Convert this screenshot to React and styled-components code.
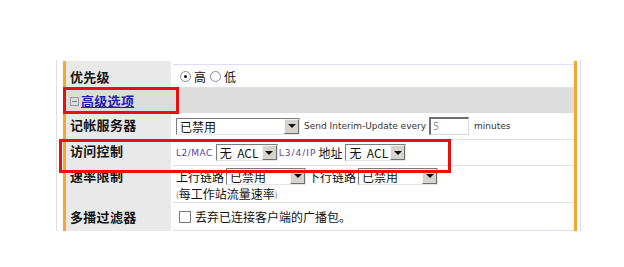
import React from "react";
import styled, { createGlobalStyle } from "styled-components";

const GlobalStyle = createGlobalStyle`
  html, body {
    margin: 0;
    padding: 0;
    background: #ffffff;
  }
  body {
    font-family: "Noto Sans CJK SC", "DejaVu Sans", sans-serif;
    color: #111;
  }
`;

const Page = styled.div`
  position: relative;
  width: 624px;
  height: 267px;
  padding: 60px 0 0 56px;
  box-sizing: border-box;
`;

const Frame = styled.div`
  width: 525px;
  box-sizing: border-box;
  border-left: 1px solid #dedede;
  border-right: 1px solid #e2dcf6;
  padding: 1px 3px 0 6px;
`;

const Panel = styled.div`
  border-left: 3px solid #f8a52c;
  border-right: 3px solid #f8a52c;
  display: grid;
  grid-template-columns: 105px 401px;
  column-gap: 2px;
  width: 514px;
  box-sizing: border-box;
`;

const Label = styled.div`
  background: #e9e9e9;
  height: ${({ h }) => h}px;
  box-sizing: border-box;
  padding: ${({ pt }) => pt || 6}px 0 0 4px;
  font-size: 13px;
  font-weight: 700;
  line-height: 16px;
  letter-spacing: 0.3px;
  color: #151515;
`;

const Value = styled.div`
  height: ${({ h }) => h}px;
  box-sizing: border-box;
  border-top: ${({ first }) => (first ? "1px solid #e2dcf6" : "none")};
  margin-top: ${({ first }) => (first ? "3px" : "0")};
  border-bottom: 1px solid #e2dcf6;
  padding: 0 0 0 3px;
  display: flex;
  flex-direction: ${({ stack }) => (stack ? "column" : "row")};
  justify-content: ${({ stack }) => (stack ? "center" : "flex-start")};
  align-items: ${({ stack }) => (stack ? "flex-start" : "center")};
  font-size: 12px;
  white-space: nowrap;
  color: #111;
`;

const Line = styled.div`
  display: flex;
  align-items: center;
  height: ${({ h }) => h || 16}px;
`;

const Header = styled.div`
  grid-column: 1 / span 2;
  height: 25px;
  background: #dcdcdc;
  display: flex;
  align-items: center;
  padding-left: 4px;
`;

const Toggle = styled.span`
  display: inline-flex;
  align-items: center;
  justify-content: center;
  width: 7px;
  height: 7px;
  border: 1px solid #9a9a9a;
  margin-right: 2px;
  position: relative;
  top: 1px;
  &::after {
    content: "";
    width: 5px;
    height: 1px;
    background: #7a7a7a;
  }
`;

const HeaderLink = styled.a`
  font-size: 13px;
  font-weight: 700;
  color: #1d1db8;
  text-decoration: underline;
  letter-spacing: 0.3px;
`;

const Radio = styled.span`
  display: inline-flex;
  align-items: center;
  justify-content: center;
  width: 9px;
  height: 9px;
  border-radius: 50%;
  border: 1px solid #8a8a8a;
  background: #fff;
  margin: 0 3px 0 ${({ ml }) => ml || 0}px;
  &::after {
    content: "";
    width: 3px;
    height: 3px;
    border-radius: 50%;
    background: ${({ checked }) => (checked ? "#111" : "transparent")};
  }
`;

const Check = styled.span`
  display: inline-block;
  width: 10px;
  height: 10px;
  border: 1px solid #7a7a7a;
  background: #fff;
  margin: 0 4px 0 3px;
`;

const SelectBox = styled.span`
  display: inline-flex;
  flex-shrink: 0;
  align-items: stretch;
  width: ${({ w }) => w}px;
  height: 17px;
  box-sizing: border-box;
  border-top: 1px solid #7c7c7c;
  border-left: 1px solid #7c7c7c;
  border-right: 1px solid #e4e4e4;
  border-bottom: 1px solid #e4e4e4;
  background: #fff;
  margin: 0 ${({ mr }) => (mr === undefined ? 2 : mr)}px 0 ${({ ml }) => ml || 0}px;
`;

const SelectText = styled.span`
  flex: 1;
  font-size: 12px;
  line-height: 15px;
  padding-left: 3px;
  white-space: pre;
  color: #111;
  font-family: "Noto Sans CJK SC", "Liberation Sans", sans-serif;
`;

const Arrow = styled.span`
  width: 15px;
  flex-shrink: 0;
  background: #d6d3cc;
  border-left: 1px solid #f4f4f4;
  border-top: 1px solid #f4f4f4;
  border-right: 1px solid #6e6e6e;
  border-bottom: 1px solid #6e6e6e;
  box-sizing: border-box;
  display: flex;
  align-items: center;
  justify-content: center;
  &::after {
    content: "";
    border-left: 4px solid transparent;
    border-right: 4px solid transparent;
    border-top: 4px solid #111;
  }
`;

const Small = styled.span`
  font-family: "DejaVu Sans", sans-serif;
  font-size: 9px;
  letter-spacing: ${({ ls }) => ls || 0}px;
  color: ${({ tone }) => tone || "#333"};
  margin: 0 ${({ mr }) => mr || 0}px 0 ${({ ml }) => ml || 0}px;
  white-space: nowrap;
`;

const TextInput = styled.span`
  display: inline-flex;
  flex-shrink: 0;
  align-items: center;
  width: 40px;
  height: 18px;
  box-sizing: border-box;
  border-top: 2px solid #6f6f6f;
  border-left: 2px solid #6f6f6f;
  border-right: 1px solid #d8d8d8;
  border-bottom: 1px solid #d8d8d8;
  padding-left: 2px;
  font-family: "DejaVu Sans", sans-serif;
  font-size: 10px;
  color: #9a9a9a;
  margin: 0 5px 0 3px;
`;

const Paren = styled.span`
  font-size: 8px;
  color: #555;
`;

const Mark = styled.div`
  position: absolute;
  left: ${({ x }) => x}px;
  top: ${({ y }) => y}px;
  width: ${({ w }) => w}px;
  height: ${({ h }) => h}px;
  box-sizing: border-box;
  border: 3px solid #ee0d0d;
  pointer-events: none;
`;

const Select = ({ w, text, ml, mr }) => (
  <SelectBox w={w} ml={ml} mr={mr}>
    <SelectText>{text}</SelectText>
    <Arrow />
  </SelectBox>
);

export default function App() {
  return (
    <Page>
      <GlobalStyle />
      <Frame>
        <Panel>
          <Label h={27} pt={8}>优先级</Label>
          <Value h={24} first>
            <Radio checked ml={4} />
            高
            <Radio ml={4} />
            低
          </Value>

          <Header>
            <Toggle />
            <HeaderLink>高级选项</HeaderLink>
          </Header>

          <Label h={27} pt={4}>记帐服务器</Label>
          <Value h={27}>
            <Select w={124} text="已禁用" ml={0} mr={4} />
            <Small>Send Interim-Update every</Small>
            <TextInput>5</TextInput>
            <Small>minutes</Small>
          </Value>

          <Label h={26} pt={3}>访问控制</Label>
          <Value h={26}>
            <Small tone="#5b3f9e" ls={0.5} mr={3}>L2/MAC</Small>
            <Select w={62} text="无  ACL" mr={1} />
            <Small tone="#5b3f9e" ls={1} mr={2}>L3/4/IP</Small>
            地址
            <Select w={61} text="无  ACL" ml={3} />
          </Value>

          <Label h={37} pt={2}>速率限制</Label>
          <Value h={37} stack>
            <Line h={18}>
              上行链路
              <Select w={80} text="已禁用" ml={2} mr={2} />
              下行链路
              <Select w={80} text="已禁用" ml={2} />
            </Line>
            <Line h={16}>
              <Paren>(</Paren>每工作站流量速率<Paren>)</Paren>
            </Line>
          </Value>

          <Label h={28} pt={6}>多播过滤器</Label>
          <Value h={28}>
            <Check />
            丢弃已连接客户端的广播包。
          </Value>
        </Panel>
      </Frame>
      <Mark x={63} y={87} w={116} h={27} />
      <Mark x={59} y={139} w={392} h={34} />
    </Page>
  );
}
